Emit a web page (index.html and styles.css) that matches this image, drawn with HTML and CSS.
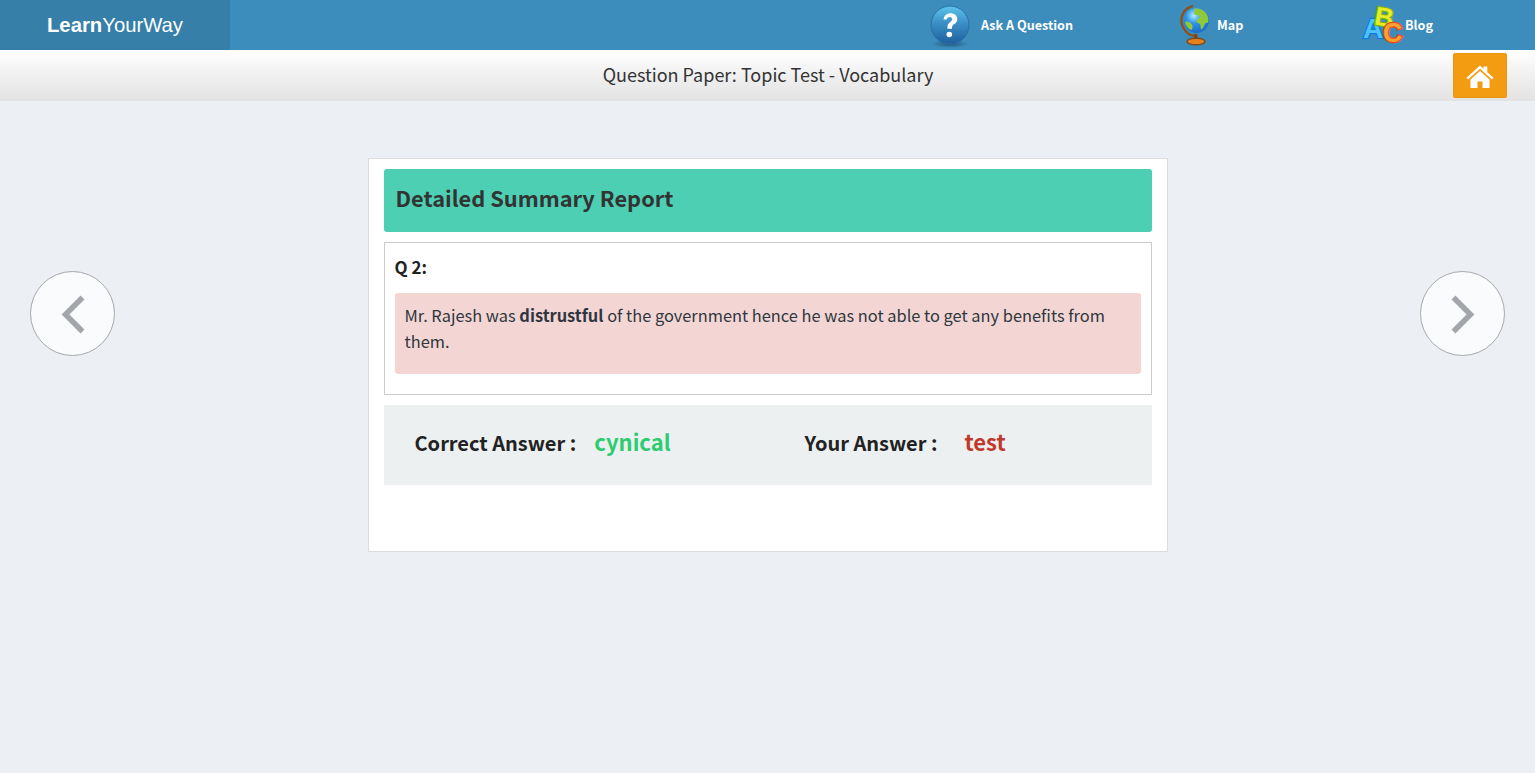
FILE: index.html
```html
<!DOCTYPE html>
<html lang="en">
<head>
<meta charset="utf-8">
<title>Question Paper</title>
<link rel="stylesheet" href="styles.css">
</head>
<body>
<header class="navbar">
  <div class="logo"><b>Learn</b>YourWay</div>
  <nav class="nav">
    <a class="nav-item nav-ask">
      <svg width="42" height="46" viewBox="0 0 42 46">
        <defs>
          <linearGradient id="q" x1="0" y1="0" x2="0" y2="1"><stop offset="0" stop-color="#5cc4ec"/><stop offset=".45" stop-color="#3a90c6"/><stop offset="1" stop-color="#1f5f9c"/></linearGradient>
          <radialGradient id="sh"><stop offset="0" stop-color="#1d4f70" stop-opacity=".85"/><stop offset="1" stop-color="#1d4f70" stop-opacity="0"/></radialGradient>
        </defs>
        <ellipse cx="20" cy="42" rx="19" ry="4" fill="url(#sh)"/>
        <circle cx="20" cy="23" r="19" fill="url(#q)" stroke="#2b6ea6" stroke-width="1"/>
        <path d="M13.500 17.500c.4-4 3.200-6.300 7-6.300 4 0 6.800 2.300 6.800 5.700 0 2.500-1.300 3.900-3 5.200-1.600 1.200-2.300 2-2.300 3.700v1h-4.600v-1.400c0-2.600 1-3.900 2.700-5.200 1.300-1 2-1.700 2-3 0-1.300-.9-2.200-2.500-2.200-1.700 0-2.700 1-2.900 2.600z" fill="#fff"/>
        <circle cx="19.300" cy="32.500" r="2.800" fill="#fff"/>
      </svg>
      <span>Ask A Question</span>
    </a>
    <a class="nav-item nav-map">
      <svg width="32" height="46" viewBox="0 0 32 46">
        <defs>
          <radialGradient id="g" cx=".4" cy=".3" r=".8"><stop offset="0" stop-color="#b4ecff"/><stop offset=".4" stop-color="#2a93ea"/><stop offset="1" stop-color="#1a5fc0"/></radialGradient>
        </defs>
        <path d="M14 4C4 6 0 17 4 25c3 6 8 9 13 9" fill="none" stroke="#8a5320" stroke-width="2.500"/>
        <circle cx="17.500" cy="18.500" r="12.500" fill="url(#g)"/>
        <g transform="translate(0 1)">
          <path d="M15 5.700c5-1 10 1.300 12.500 5.300 2 3 2.300 6.500 1.500 8.500-1.500 1-2.500-.5-3.200 1.500-.6 2-2 4.500-3.300 5.500-1 0-1-2.500-1-4.500s-2.500-1-3.500-2.800c-1-1.800 0-3 1.800-3.700 2-.8 0-2.800-1.300-3.200-1.500-.5-3.500 0-3.500-1.800 0-1.500 0-2.800 0-4.800z" fill="#8fc93a"/>
          <path d="M6 19c2-1.500 5.500 0 7 2.500 1 2 .4 4.500-.5 5.500-2.800-1-5.800-4-6.500-8z" fill="#8fc93a"/>
        </g>
        <rect x="15" y="32" width="3.500" height="5" fill="#7a4a1e"/>
        <ellipse cx="17" cy="39.500" rx="9" ry="3.300" fill="#e8811a" stroke="#7a4a1e" stroke-width="1.500"/>
      </svg>
      <span>Map</span>
    </a>
    <a class="nav-item nav-blog">
      <div class="abc" aria-hidden="true">
        <span class="abc-a">A</span>
        <span class="abc-b">B</span>
        <span class="abc-c">C</span>
      </div>
      <span class="blog-label">Blog</span>
    </a>
  </nav>
</header>
<div class="subbar">
  <h1 class="paper-title">Question Paper: Topic Test - Vocabulary</h1>
  <button class="home-btn" type="button" aria-label="Home">
    <svg width="28" height="24" viewBox="0 0 28 24"><path d="M14 1.500 17.500 4.700V2.500h3.800v5.700L27.500 13.800l-1.500 1.700L14 4.800 2 15.500.5 13.800z" fill="#fff"/><path d="M14 7 4.500 15.500V24h7v-6.500h5V24h7v-8.500z" fill="#fff"/></svg>
  </button>
</div>
<main class="stage">
  <button class="arrow" type="button" aria-label="Previous">
    <svg width="28" height="42" viewBox="0 0 28 42"><path d="M23.500 4.500 6.500 21.500l17 17" fill="none" stroke="#a3a6ab" stroke-width="5.500"/></svg>
  </button>
  <section class="card">
    <h2 class="card-head">Detailed Summary Report</h2>
    <div class="question">
      <div class="q-no">Q 2:</div>
      <div class="q-text">Mr. Rajesh was <b>distrustful</b> of the government hence he was not able to get any benefits from them.</div>
    </div>
    <div class="answers">
      <div class="answer answer-correct"><span class="label">Correct Answer :</span><span class="value ok">cynical</span></div>
      <div class="answer answer-yours"><span class="label">Your Answer :</span><span class="value bad">test</span></div>
    </div>
  </section>
  <button class="arrow" type="button" aria-label="Next">
    <svg width="28" height="42" viewBox="0 0 28 42"><path d="M4.500 4.500 21.500 21.500l-17 17" fill="none" stroke="#a3a6ab" stroke-width="5.500"/></svg>
  </button>
</main>
</body>
</html>
```
FILE: styles.css
```css
* { box-sizing: border-box; }
html, body { margin: 0; height: 100%; }
body {
  background: #eceff4;
  font-family: "Noto Sans CJK SC", "Noto Sans", sans-serif;
  color: #2b2b2b;
  overflow: hidden;
}
.navbar {
  display: flex;
  height: 50px;
  background: #3c8dbc;
}
.logo {
  width: 230px;
  height: 50px;
  background: #367fa9;
  color: #fff;
  font: 20.3px/50px "Liberation Sans", Arial, sans-serif;
  text-align: center;
}
.nav { display: flex; flex: 1; align-items: center; }
.nav-item {
  display: flex;
  align-items: center;
  color: #fff;
  font-size: 12.6px;
  font-weight: 700;
  line-height: 20px;
}
.nav-ask { margin-left: 700px; width: 249px; }
.nav-ask span { margin-left: 9px; }
.nav-map { width: 182px; }
.nav-map span { margin-left: 6px; }
.blog-label { margin-left: 2px; }
.abc {
  position: relative;
  width: 42px;
  height: 44px;
}
.abc span {
  position: absolute;
  font-family: "Liberation Sans", sans-serif;
  font-weight: 700;
  -webkit-text-stroke-width: 2.5px;
  paint-order: stroke fill;
}
.abc-a {
  left: 2px;
  top: 12px;
  font-size: 28px;
  line-height: 28px;
  color: #4cc4fa;
  -webkit-text-stroke-color: #1078e0;
}
.abc-b {
  left: 14px;
  top: 1px;
  font-size: 26px;
  line-height: 26px;
  color: #e4ee28;
  -webkit-text-stroke-color: #7ab010;
  transform: rotate(10deg);
}
.abc-c {
  left: 22px;
  top: 17px;
  font-size: 27px;
  line-height: 27px;
  color: #f8a030;
  -webkit-text-stroke-color: #e8481a;
}
.subbar {
  position: relative;
  height: 51px;
  padding-bottom: 3px;
  background: linear-gradient(#fff, #e2e2e2);
  display: flex;
  align-items: center;
  justify-content: center;
}
.paper-title {
  margin: 0 0 0 1px;
  font-size: 18px;
  font-weight: 400;
  line-height: 48px;
  color: #333;
}
.home-btn {
  position: absolute;
  left: 1453px;
  top: 3px;
  width: 54px;
  height: 45px;
  padding: 0;
  border: 1px solid #e8950f;
  border-radius: 2px;
  background: #f39c12;
  display: flex;
  align-items: center;
  justify-content: center;
}
.stage {
  display: flex;
  justify-content: space-between;
  align-items: flex-start;
  padding: 57px 30px 0;
}
.arrow {
  width: 85px;
  height: 85px;
  margin-top: 113px;
  padding: 0;
  border: 1px solid #a8a8a8;
  border-radius: 50%;
  background: #f9fbfd;
  display: flex;
  align-items: center;
  justify-content: center;
}
.card {
  width: 800px;
  height: 394px;
  background: #fff;
  border: 1px solid #dcdcdc;
  padding: 10px 15px;
}
.card-head {
  margin: 0;
  height: 63px;
  padding: 0 12px;
  background: #4ccfb3;
  border-radius: 3px;
  color: #333;
  font-size: 21.8px;
  font-weight: 700;
  line-height: 58px;
}
.question {
  margin-top: 10px;
  height: 153px;
  border: 1px solid #ccc;
  padding: 10px;
}
.q-no {
  font-size: 17px;
  font-weight: 700;
  line-height: 27px;
  color: #222;
}
.q-text {
  margin-top: 13px;
  height: 81px;
  padding: 9px 10px;
  background: #f3d6d3;
  border-radius: 3px;
  font-size: 16.4px;
  line-height: 26px;
  color: #2f3640;
}
.answers {
  display: flex;
  align-items: center;
  margin-top: 10px;
  height: 80px;
  padding: 0 31px 8px;
  background: #ecf0f1;
  font-size: 20px;
  font-weight: 700;
}
.answer { display: flex; align-items: baseline; }
.answer-correct { width: 390px; }
.label { color: #222; }
.value { font-size: 22px; }
.answer-correct .value { margin-left: 18px; }
.answer-yours .value { margin-left: 27px; }
.ok { color: #2ecc71; }
.bad { color: #c0392b; }
```
